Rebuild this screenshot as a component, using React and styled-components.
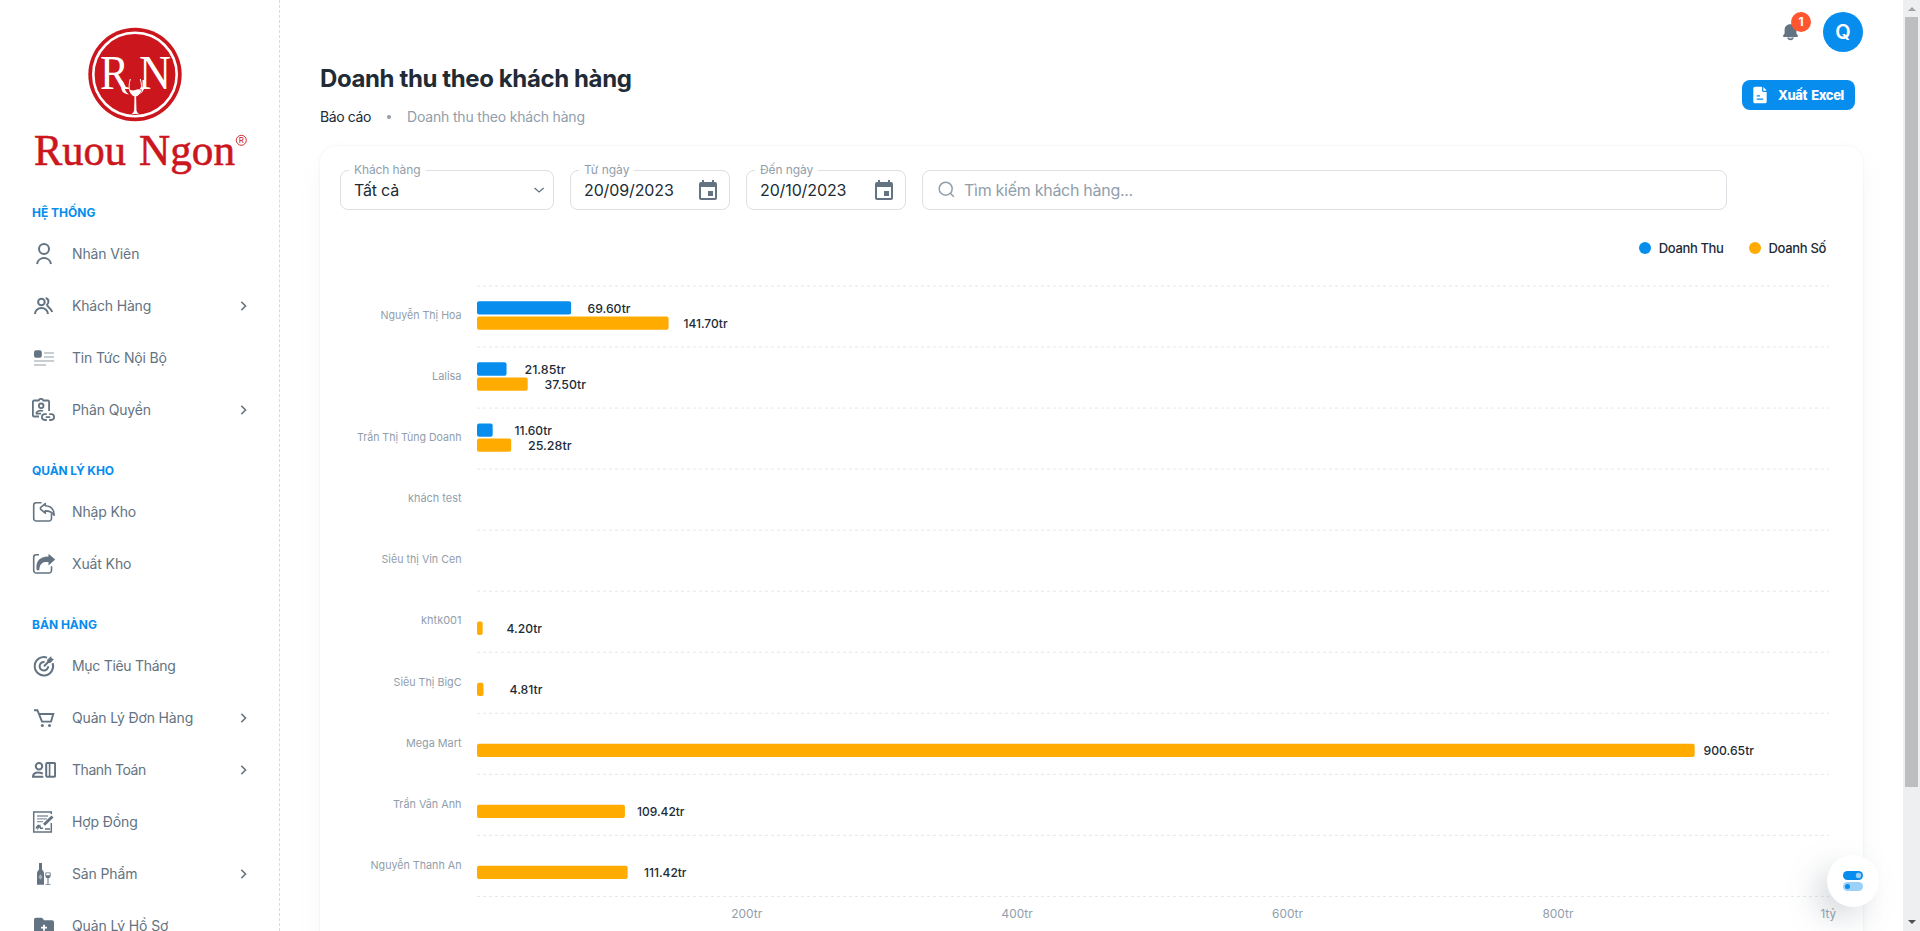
import React from "react";
import styled, { createGlobalStyle } from "styled-components";

const Global = createGlobalStyle`
  * { box-sizing: border-box; }
  html, body { margin: 0; padding: 0; background: #fff; overflow: hidden; }
  body { font-family: Inter, Roboto, "Liberation Sans", sans-serif; color: #212b36; }
`;

const Page = styled.div`
  position: relative;
  display: flex;
  width: 100%;
  height: 931px;
  overflow: hidden;
  background: #fff;
`;

const Sidebar = styled.nav`
  flex: none;
  width: 280px;
  height: 931px;
  overflow: hidden;
  border-right: 1px dashed #d5dade;
`;

const LogoBox = styled.div`
  height: 180px;
  svg { display: block; }
`;

const SectionTitle = styled.div`
  padding: 24px 0 8px 32px;
  font-size: 12px;
  line-height: 18px;
  font-weight: 700;
  color: #078dee;
  white-space: nowrap;
  letter-spacing: ${(p) => p.$ls || 0}px;
`;

const NavItem = styled.div`
  display: flex;
  align-items: center;
  height: 48px;
  margin-bottom: 4px;
  padding: 0 27px 0 32px;
  color: #637381;
`;

const NavLabel = styled.span`
  flex: 1;
  margin-left: 16px;
  font-size: 14px;
  line-height: 22px;
  white-space: nowrap;
  letter-spacing: ${(p) => p.$ls || 0}px;
`;

const Main = styled.main`
  flex: 1;
  min-width: 0;
  padding: 0 40px;
`;

const TopBar = styled.header`
  display: flex;
  justify-content: flex-end;
  align-items: center;
  gap: 20px;
  height: 64px;
`;

const Bell = styled.div`
  position: relative;
  width: 26px;
  height: 24px;
  padding-left: 2px;
  svg { display: block; }
`;

const Badge = styled.span`
  position: absolute;
  left: 14px;
  top: -8px;
  width: 20px;
  height: 20px;
  border-radius: 50%;
  background: #ff5630;
  color: #fff;
  font-size: 12px;
  font-weight: 700;
  line-height: 20px;
  text-align: center;
`;

const Avatar = styled.div`
  width: 40px;
  height: 40px;
  border-radius: 50%;
  background: #078dee;
  color: #fff;
  font-size: 20px;
  font-weight: 600;
  line-height: 40px;
  text-align: center;
`;

const Heading = styled.div`
  display: flex;
  justify-content: space-between;
  height: 82px;
  padding-right: 8px;
`;

const Title = styled.h1`
  margin: 1px 0 0;
  font-size: 24px;
  line-height: 28px;
  font-weight: 700;
  letter-spacing: -0.39px;
  white-space: nowrap;
`;

const Crumbs = styled.div`
  display: flex;
  align-items: center;
  margin-top: 13px;
  font-size: 14px;
  line-height: 22px;
  white-space: nowrap;
`;

const Crumb = styled.span`
  color: ${(p) => (p.$muted ? "#919eab" : "#212b36")};
  letter-spacing: ${(p) => p.$ls || 0}px;
`;

const Dot = styled.span`
  width: 4px;
  height: 4px;
  margin: 0 16px;
  border-radius: 50%;
  background: #919eab;
`;

const ExportButton = styled.button`
  display: flex;
  align-items: center;
  width: 113px;
  height: 30px;
  margin: 16px 0 0;
  padding: 0 0 0 8px;
  border: 0;
  border-radius: 8px;
  background: #078dee;
  color: #fff;
  font: 800 13px/22px Inter, sans-serif;
  letter-spacing: -0.45px;
  word-spacing: 2px;
  white-space: nowrap;
  svg { margin-right: 8px; }
`;

const Card = styled.section`
  height: 900px;
  padding: 24px 20px 0;
  border-radius: 16px;
  box-shadow: 0 0 2px rgba(145, 158, 171, 0.2), 0 12px 24px -4px rgba(145, 158, 171, 0.12);
`;

const Filters = styled.div`
  display: flex;
  gap: 16px;
`;

const Field = styled.div`
  position: relative;
  display: flex;
  align-items: center;
  width: ${(p) => p.$w}px;
  height: 40px;
  padding: 0 ${(p) => p.$pr || 12}px 1px ${(p) => p.$pl || 13}px;
  border: 1px solid #dce0e4;
  border-radius: 8px;
  font-size: 16px;
  svg { flex: none; }
`;

const FieldLabel = styled.label`
  position: absolute;
  left: 8px;
  top: -10px;
  padding: 0 5px;
  background: #fff;
  color: #919eab;
  font-size: 12px;
  line-height: 18px;
  white-space: nowrap;
  letter-spacing: ${(p) => p.$ls || 0}px;
`;

const FieldValue = styled.span`
  flex: 1;
  color: ${(p) => (p.$placeholder ? "#919eab" : "#212b36")};
  letter-spacing: ${(p) => p.$ls || 0}px;
  white-space: nowrap;
`;

const Legend = styled.div`
  display: flex;
  justify-content: flex-end;
  align-items: center;
  height: 20px;
  margin: 28px 17px 0 0;
  font-size: 13px;
  font-weight: 450;
`;

const LegendItem = styled.span`
  display: flex;
  align-items: center;
  margin-left: 25px;
  white-space: nowrap;
  letter-spacing: ${(p) => p.$ls || 0}px;
  &::before {
    content: "";
    width: 12px;
    height: 12px;
    margin-right: 8px;
    border-radius: 50%;
    background: ${(p) => p.$color};
  }
`;

const ChartSvg = styled.svg`
  display: block;
  margin-top: 12px;
  font-family: Inter, Roboto, sans-serif;
`;

const ScrollTrack = styled.div`
  flex: none;
  display: flex;
  flex-direction: column;
  align-items: center;
  width: 17px;
  height: 931px;
  background: #eeeff1;
`;

const ScrollThumb = styled.div`
  width: 13px;
  height: 770px;
  background: #bdbec0;
`;

const Arrow = styled.span`
  width: 0;
  height: 0;
  border: 4px solid transparent;
  ${(p) => (p.$up
    ? "border-top: 0; border-bottom-color: #a0a1a4; margin: 7px 0 6px;"
    : "border-bottom: 0; border-top-color: #505050; margin-top: 133px;")}
`;

const SettingsFab = styled.div`
  position: absolute;
  left: 1827px;
  top: 855px;
  display: flex;
  align-items: center;
  justify-content: center;
  width: 52px;
  height: 52px;
  border-radius: 50%;
  background: #fff;
  box-shadow: -12px 12px 32px -4px rgba(130, 143, 156, 0.42);
`;

const stroke = { fill: "none", stroke: "currentColor", strokeWidth: 2 };

const icons = {
  user: <g {...stroke} strokeWidth="2"><circle cx="12" cy="7" r="5" /><path d="M5 22a7.1 7.1 0 0 1 14 0" /></g>,
  group: (
    <g {...stroke} strokeWidth="2">
      <circle cx="9.4" cy="8" r="3.3" />
      <path d="M3 20a6.3 5.8 0 0 1 12.9 0M13.6 4.2c3.3.3 3.7 4.8 1.4 6.6.8 3.2 4.3 3.4 5.2 7.2" />
    </g>
  ),
  news: (
    <g fill="currentColor">
      <rect x="2" y="4.2" width="7.8" height="7.6" rx="2" />
      <path opacity=".35" d="M12 6h10v2H12zM12 10h10v2H12zM2 14h20v2H2zM2 18h12v2H2z" />
    </g>
  ),
  role: (
    <g {...stroke} strokeWidth="1.8">
      <path d="M7 18.5H2a1.1 1.1 0 0 1-1.1-1.1V3.6A1.1 1.1 0 0 1 2 2.5h4.7a2.4 2.4 0 0 1 4.6 0H16a1.1 1.1 0 0 1 1.1 1.1V13" />
      <circle cx="9.2" cy="7.8" r="2.3" />
      <path d="M4 15.6c.6-2.4 3.6-3.6 7-2.6M4 15.6h5" />
      <path d="M14.8 22h-2a2.9 2.9 0 0 1 0-5.8h2M17.2 16.2h2a2.9 2.9 0 0 1 0 5.8h-2M13.8 19.1h4.4" />
    </g>
  ),
  importIcon: (
    <g {...stroke} strokeWidth="1.6" strokeLinejoin="round">
      <path d="M9.5 2.8H4.2a2.5 2.5 0 0 0-2.5 2.5v13.2a2.5 2.5 0 0 0 2.5 2.5H17a2.5 2.5 0 0 0 2.5-2.5v-5" />
      <path d="M8.5 7.6l4.8-4v2.2c5.4.2 8.7 3 8.9 9.4-1.9-3-4.3-4.3-8.9-4.3v2.3l-4.8-4z" />
    </g>
  ),
  exportIcon: (
    <g>
      <path {...stroke} strokeWidth="1.6" d="M7 2.800H4.2a2.5 2.5 0 0 0-2.5 2.5v13.2a2.5 2.5 0 0 0 2.5 2.5H17a2.5 2.5 0 0 0 2.5-2.5v-4.3" />
      <path fill="currentColor" d="M16.5 1.8l6.7 5.8-6.7 5.8v-3.3c-5-.4-9 .7-9.2 8.200H4.8C3.3 11.3 6 4.400 16.5 4.400z" />
    </g>
  ),
  target: (
    <g {...stroke} strokeWidth="2">
      <path d="M15 3.6a9.2 9.2 0 1 0 5.6 5.6" />
      <path d="M12.5 8a4.3 4.3 0 1 0 3.7 4.2M12 12.3l5-5" />
      <path d="M15.8 8.5V5.8l3-3 .5 2 2 .5-3 3.2z" fill="currentColor" strokeWidth="1" />
    </g>
  ),
  cart: (
    <g>
      <path {...stroke} strokeWidth="1.9" d="M2 4.2h3.4L10 15.6h9L21.3 8H7" />
      <circle cx="10.3" cy="19.6" r="1.5" fill="currentColor" /><circle cx="17.5" cy="19.6" r="1.5" fill="currentColor" />
    </g>
  ),
  payment: (
    <g {...stroke} strokeWidth="2">
      <circle cx="7" cy="8.2" r="3.2" />
      <path d="M1 18.9c0-5 4.8-5 9.8-3.4M0 18.7h11.3" />
      <rect x="14.2" y="5" width="8.9" height="13.8" rx="1" /><path d="M17.6 5v14" strokeWidth="1.6" />
    </g>
  ),
  contract: (
    <g {...stroke} strokeWidth="1.5">
      <path d="M19.3 4V2H1.7v20h17.6v-9" />
      <path d="M5 6h11M5 8.8h10M5 11.6h6" strokeWidth="1.3" opacity=".75" />
      <path d="M12 14.8l8.5-8.3" strokeWidth="2.9" />
      <path d="M4 18.5c2.7-5 2.6-3.5 2.2-.7l1.6-2 .8 2.5H11M13 19h5" />
    </g>
  ),
  wine: (
    <g fill="currentColor">
      <path d="M7 1h3v6.2c0 1.2 2 1.5 2 3.8v11.7H5V11c0-2.3 2-2.6 2-3.8z" />
      <path d="M8.5 12.2l2 2.8-2 2.8-2-2.8z" fill="#aab3bc" />
      <path d="M13.5 10.5h5c.7 3.7-.2 5.4-2 5.8V22h2v.8h-5V22h2v-5.7c-1.8-.4-2.7-2.1-2-5.8zm.8.8l-.2 2h3.8l-.2-2z" />
    </g>
  ),
  folder: (
    <g>
      <path fill="currentColor" d="M4 3.7h6l2.2 2.500H20a2 2 0 0 1 2 2V19a2 2 0 0 1-2 2H4a2 2 0 0 1-2-2V5.700a2 2 0 0 1 2-2z" />
      <path stroke="#fff" strokeWidth="1.8" d="M12 10.700v6M9 13.700h6" />
    </g>
  ),
};

const sections = [
  { title: "HỆ THỐNG", ls: 0, items: [
    ["Nhân Viên", "user", 0, -0.12], ["Khách Hàng", "group", 1, -0.18],
    ["Tin Tức Nội Bộ", "news", 0, -0.17], ["Phân Quyền", "role", 1, -0.13]] },
  { title: "QUẢN LÝ KHO", ls: -0.1, items: [["Nhập Kho", "importIcon", 0, -0.15], ["Xuất Kho", "exportIcon", 0, -0.12]] },
  { title: "BÁN HÀNG", ls: 0, items: [
    ["Mục Tiêu Tháng", "target", 0, -0.3], ["Quản Lý Đơn Hàng", "cart", 1, -0.16], ["Thanh Toán", "payment", 1, -0.45],
    ["Hợp Đồng", "contract", 0, -0.13], ["Sản Phẩm", "wine", 1, -0.13], ["Quản Lý Hồ Sơ", "folder", 0, -0.13]] },
];

const Icon = ({ name }) => <svg width="24" height="24" viewBox="0 0 24 24">{icons[name]}</svg>;

const Chevron = () => (
  <svg width="16" height="16" viewBox="0 0 16 16"><path {...stroke} strokeWidth="1.6" d="M5.300 3.800l4.200 4.200-4.200 4.200" /></svg>
);

const Calendar = () => (
  <svg width="24" height="24" viewBox="0 0 24 24" fill="#637381">
    <path d="M19 4h-1V2h-2v2H8V2H6v2H5a2 2 0 0 0-2 2v14c0 1.100.9 2 2 2h14a2 2 0 0 0 2-2V6a2 2 0 0 0-2-2zm0 16H5V9h14zm-7-7h5v5h-5z" />
  </svg>
);

const Logo = () => (
  <svg width="279" height="180" viewBox="0 0 279 180" fill="#cb161d" fontFamily="'Liberation Serif', serif">
    <circle cx="135" cy="74.500" r="46.700" />
    <circle cx="135" cy="74.500" r="41.700" fill="none" stroke="#fff" strokeWidth="2.600" />
    <text x="100" y="89" fontSize="48" fill="#fff" textLength="29" lengthAdjust="spacingAndGlyphs">R</text>
    <text x="139" y="89" fontSize="48" fill="#fff" textLength="32" lengthAdjust="spacingAndGlyphs">N</text>
    <path d="M120.500 80q3.500 1 4 6 .3 6 4.500 8.500-6-.3-7.500-5zM142.500 80h3q0 10-5.500 14.500 2.500-4 2.500-8z" fill="#fff" />
    <path d="M130.300 79c-2.800 10-.5 15.500 5 17 5.500-1.500 7.800-7 5-17" fill="none" stroke="#fff" strokeWidth="1" />
    <path d="M129.800 89.500q3 1.500 5.500.5t5.500-.5q-.5 5.500-4.700 7l.4 14q.4 2 2.500 3.500h-7.400q2-1.500 2.500-3.500l.4-14q-4.200-1.500-4.700-7z" fill="#fff" />
    <g stroke="#cb161d" strokeWidth=".6">
      <text x="34" y="165" fontSize="45" textLength="92" lengthAdjust="spacingAndGlyphs">Ruou</text>
      <text x="139" y="165" fontSize="45" textLength="96" lengthAdjust="spacingAndGlyphs">Ngon</text>
    </g>
    <circle cx="241.300" cy="140.300" r="5" fill="none" stroke="#cb161d" strokeWidth=".9" />
    <text x="241.400" y="143.200" fontSize="8" textAnchor="middle" fontFamily="Inter, sans-serif">R</text>
  </svg>
);

// Each series: value in millions, its label, the x where the label starts, the label's width.
const rows = [
  { name: "Nguyễn Thị Hoa", nw: 81, thu: [69.6, "69.60tr", 587.5, 43], so: [141.7, "141.70tr", 683.5, 44] },
  { name: "Lalisa", nw: 29.5, thu: [21.85, "21.85tr", 524.5, 41], so: [37.5, "37.50tr", 544.5, 41.5] },
  { name: "Trần Thị Tùng Doanh", nw: 104.5, thu: [11.6, "11.60tr", 514.5, 37.5], so: [25.28, "25.28tr", 528, 43.5] },
  { name: "khách test", nw: 53.5 },
  { name: "Siêu thị Vin Cen", nw: 80 },
  { name: "khtk001", nw: 40.5, so: [4.2, "4.20tr", 506.5, 35.5] },
  { name: "Siêu Thị BigC", nw: 68, so: [4.81, "4.81tr", 509.5, 33] },
  { name: "Mega Mart", nw: 55.5, so: [900.65, "900.65tr", 1703.5, 50.5] },
  { name: "Trần Văn Anh", nw: 68.5, so: [109.42, "109.42tr", 637, 47.5] },
  { name: "Nguyễn Thanh An", nw: 91, so: [111.42, "111.42tr", 644, 42.5] },
];

const ROW = 61.04;

const Series = ({ data, y, color }) => (
  <g>
    <rect x="477" y={y} width={data[0] * 1.352} height="13.3" rx="2" fill={color} />
    <text x={data[2]} y={y + 11.6} fontSize="12" fontWeight="500" fill="#212b36" textLength={data[3]} lengthAdjust="spacingAndGlyphs">{data[1]}</text>
  </g>
);

const Chart = () => (
  <ChartSvg width="1503" height="661" viewBox="340 270 1503 661">
    {Array.from({ length: 11 }, (_, i) => (
      <line key={i} x1="477" x2="1829" y1={286 + i * ROW} y2={286 + i * ROW} stroke="#e4e7ea" strokeDasharray="3 3" />
    ))}
    {rows.map((r, i) => {
      const top = 286 + i * ROW;
      return (
        <g key={r.name}>
          <text x={461.5 - r.nw} y={top + (i > 5 ? 34 : 33)} fontSize="11" fill="#919eab" textLength={r.nw} lengthAdjust="spacingAndGlyphs">{r.name}</text>
          {r.thu && <Series data={r.thu} y={top + 15.3} color="#078dee" />}
          {r.so && <Series data={r.so} y={top + 30.4} color="#ffab00" />}
        </g>
      );
    })}
    {["200tr", "400tr", "600tr", "800tr", "1tỷ"].map((t, i) => {
      const w = i === 4 ? 15.5 : 31;
      return (
        <text key={t} x={746.7 + i * 270.4 - w / 2} y="918" fontSize="12" fill="#919eab" textLength={w} lengthAdjust="spacingAndGlyphs">{t}</text>
      );
    })}
  </ChartSvg>
);

export default function App() {
  return (
    <Page>
      <Global />
      <Sidebar>
        <LogoBox><Logo /></LogoBox>
        {sections.map((s) => (
          <div key={s.title}>
            <SectionTitle $ls={s.ls}>{s.title}</SectionTitle>
            {s.items.map(([label, icon, more, ls]) => (
              <NavItem key={label}>
                <Icon name={icon} />
                <NavLabel $ls={ls}>{label}</NavLabel>
                {more ? <Chevron /> : null}
              </NavItem>
            ))}
          </div>
        ))}
      </Sidebar>
      <Main>
        <TopBar>
          <Bell>
            <svg width="24" height="24" viewBox="0 0 24 24" fill="#637381">
              <path d="M11.300 4.200c-3.600 0-5.700 2.500-5.700 6v3.300l-1.400 1.700q-.8 1.700.8 1.800h13q1.600-.1.800-1.800l-1.400-1.700v-3.300c0-3.500-2.200-6-6.100-6zM8.300 17.500h6.500a3.300 3.300 0 0 1-6.500 0z" />
              <path d="M9.800 17.500h3.500a1.800 1.300 0 0 1-3.500 0z" fill="#fff" />
            </svg>
            <Badge>1</Badge>
          </Bell>
          <Avatar>Q</Avatar>
        </TopBar>
        <Heading>
          <div>
            <Title>Doanh thu theo khách hàng</Title>
            <Crumbs>
              <Crumb $ls={-0.38}>Báo cáo</Crumb>
              <Dot />
              <Crumb $muted $ls={-0.19}>Doanh thu theo khách hàng</Crumb>
            </Crumbs>
          </div>
          <ExportButton>
            <svg width="20" height="20" viewBox="0 0 24 24">
              <path fill="#fff" d="M6 2h8.500v4.500a2 2 0 0 0 2 2H20V20a2 2 0 0 1-2 2H6a2 2 0 0 1-2-2V4a2 2 0 0 1 2-2zM16 2.500L19.500 6v1H16z" />
              <path stroke="#078dee" strokeWidth="1.500" d="M8 13h4M8 17h8" />
            </svg>
            Xuất Excel
          </ExportButton>
        </Heading>
        <Card>
          <Filters>
            <Field $w={214} $pr={6}>
              <FieldLabel $ls={-0.1}>Khách hàng</FieldLabel>
              <FieldValue $ls={-0.2}>Tất cả</FieldValue>
              <svg width="16" height="16" viewBox="0 0 16 16"><path d="M3.500 6l4.600 4 4.600-4" fill="none" stroke="#637381" strokeWidth="1.300" /></svg>
            </Field>
            <Field $w={160} $pr={9}>
              <FieldLabel>Từ ngày</FieldLabel>
              <FieldValue $ls={-0.12}>20/09/2023</FieldValue>
              <Calendar />
            </Field>
            <Field $w={160} $pr={9}>
              <FieldLabel $ls={-0.1}>Đến ngày</FieldLabel>
              <FieldValue $ls={-0.12}>20/10/2023</FieldValue>
              <Calendar />
            </Field>
            <Field $w={805} $pl={14}>
              <svg width="20" height="20" viewBox="0 0 20 20" fill="none" stroke="#919eab" strokeWidth="1.500" style={{ marginRight: 7 }}>
                <circle cx="8.700" cy="8.700" r="6.500" /><path d="M13.300 13.300l3.500 3.500" />
              </svg>
              <FieldValue $placeholder $ls={-0.28}>Tìm kiếm khách hàng...</FieldValue>
            </Field>
          </Filters>
          <Legend>
            <LegendItem $color="#078dee" $ls={-0.36}>Doanh Thu</LegendItem>
            <LegendItem $color="#ffab00" $ls={-0.33}>Doanh Số</LegendItem>
          </Legend>
          <Chart />
        </Card>
      </Main>
      <ScrollTrack>
        <Arrow $up />
        <ScrollThumb />
        <Arrow />
      </ScrollTrack>
      <SettingsFab>
        <svg width="22" height="22" viewBox="0 0 22 22">
          <rect x="1" y="1" width="20" height="9" rx="4.500" fill="#078dee" />
          <circle cx="16.500" cy="5.500" r="2.700" fill="#9bd0f8" />
          <rect x="1" y="12" width="20" height="9" rx="4.500" fill="#9bd0f8" />
          <circle cx="5.500" cy="16.500" r="2.500" fill="#078dee" />
        </svg>
      </SettingsFab>
    </Page>
  );
}
